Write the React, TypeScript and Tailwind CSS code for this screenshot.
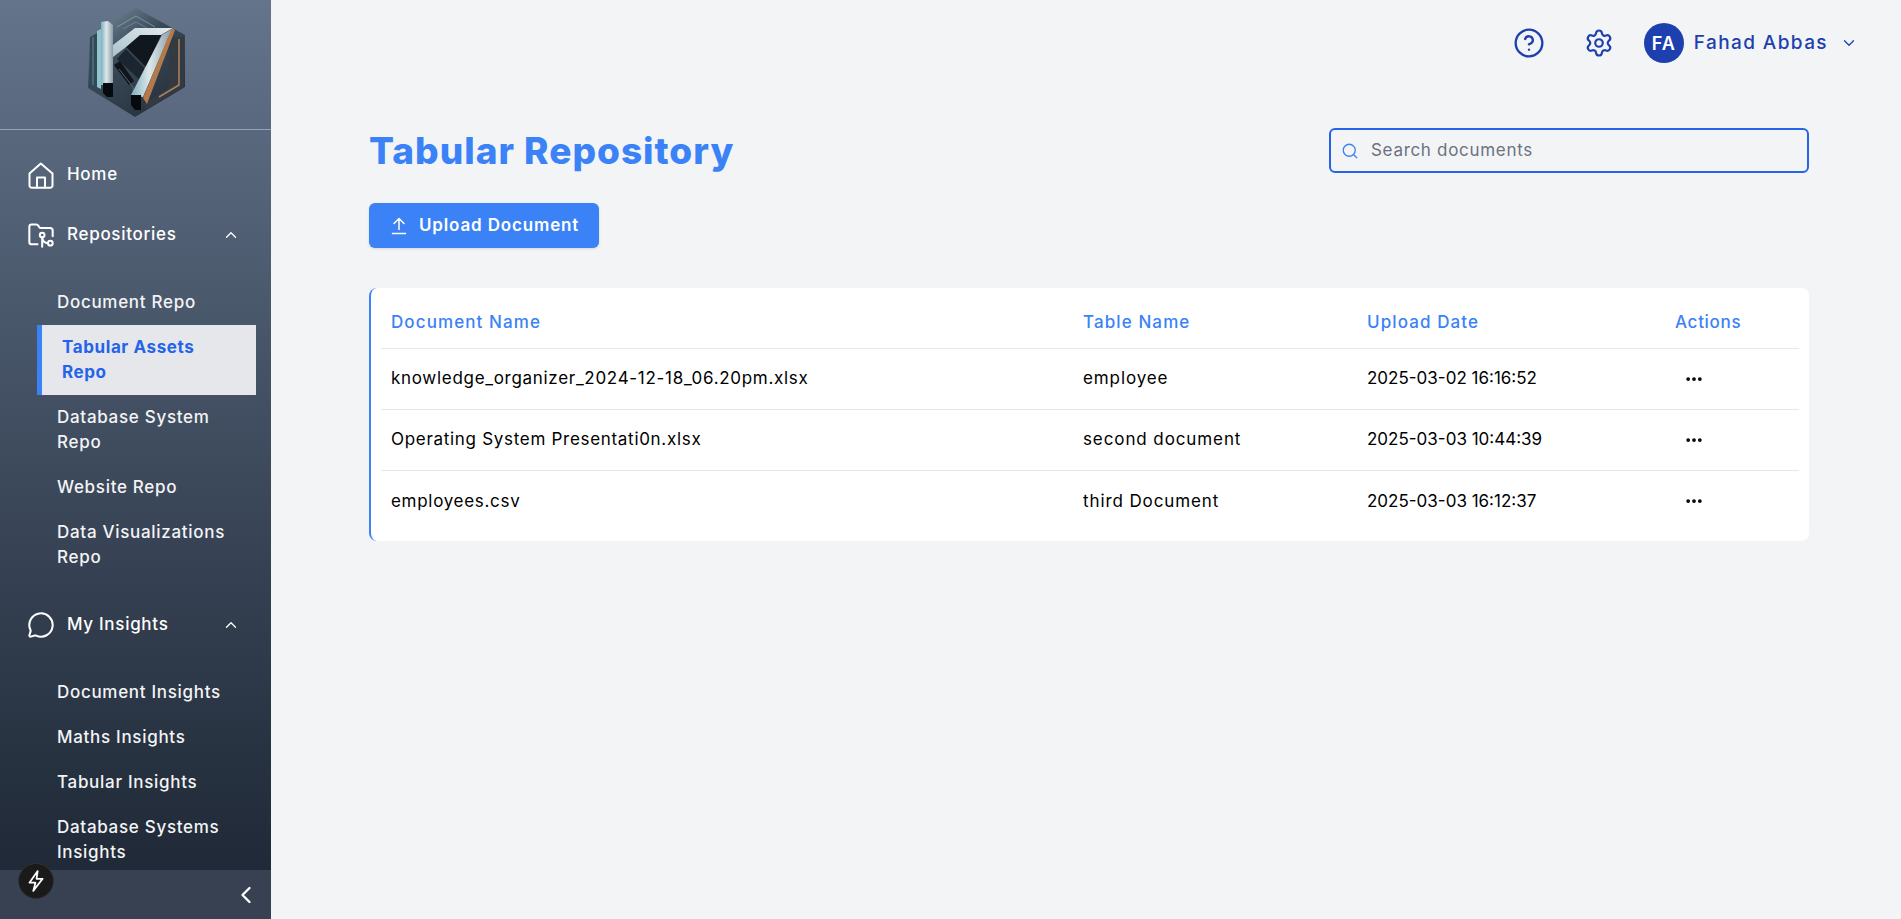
import {
  ChevronDown,
  ChevronLeft,
  ChevronUp,
  CircleHelp,
  FolderGit2,
  MessageCircle,
  MoreHorizontal,
  Search,
  Settings,
} from "lucide-react";
import type { ReactNode } from "react";

const docs = [
  {
    name: "knowledge_organizer_2024-12-18_06.20pm.xlsx",
    table: "employee",
    date: "2025-03-02 16:16:52",
  },
  {
    name: "Operating System Presentati0n.xlsx",
    table: "second document",
    date: "2025-03-03 10:44:39",
  },
  {
    name: "employees.csv",
    table: "third Document",
    date: "2025-03-03 16:12:37",
  },
];

function Logo() {
  return (
    <svg width="100" height="112" viewBox="0 0 100 112">
      <defs>
        <linearGradient id="hex" x1="0" y1="0" x2="0.7" y2="1">
          <stop offset="0" stopColor="#7d97a6" />
          <stop offset="0.45" stopColor="#3a4a59" />
          <stop offset="1" stopColor="#27313d" />
        </linearGradient>
        <linearGradient id="steel" x1="0" y1="0" x2="1" y2="0">
          <stop offset="0" stopColor="#7fb0bd" />
          <stop offset="0.45" stopColor="#dde7ea" />
          <stop offset="1" stopColor="#8a9ca8" />
        </linearGradient>
        <linearGradient id="arm" x1="0" y1="1" x2="1" y2="0">
          <stop offset="0" stopColor="#a9c4cc" />
          <stop offset="1" stopColor="#e4ebee" />
        </linearGradient>
      </defs>
      <polygon points="49,1 98,28 98,80 48,110 1,81 3,28" fill="url(#hex)" />
      <path d="M30 20 49 9 68 20" fill="none" stroke="#9fb3bf" strokeWidth="1" opacity="0.6" />
      <path d="M36 22 49 15 60 21" fill="none" stroke="#9fb3bf" strokeWidth="1" opacity="0.4" />
      <polygon points="3,30 12,25 12,82 2,80" fill="#33495a" />
      <path d="M6 30V78" stroke="#5f8a99" strokeWidth="1" />
      <polygon points="10,24 14,22 14,82 10,80" fill="#8fc3d0" />
      <polygon points="82,30 97,30 97,80 60,102 56,98 82,80" fill="#343a42" />
      <path d="M92 32V78L72 90" fill="none" stroke="#a9825f" strokeWidth="1.5" />
      <polygon points="39,40 53,28 74,28 59,60" fill="#10171e" />
      <polygon points="30,52 39,42 58,62 52,72" fill="#1b2630" />
      <polygon points="27,58 33,54 47,74 42,78" fill="#0f151b" />
      <path d="M32 62 46 80V96" fill="none" stroke="#52656f" strokeWidth="1" />
      <polygon points="26,38 48,21 86,21 74,28 53,28 39,40 26,50" fill="url(#arm)" />
      <polygon points="14,15 21,14 26,18 26,78 14,78" fill="url(#steel)" />
      <polygon points="75,28 85,22 56,90 44,88" fill="url(#steel)" />
      <polygon points="85,21 88,23 60,97 56,91" fill="#b57a4c" />
      <polygon points="16,76 26,76 26,90 20,90 16,86" fill="#06090d" />
      <polygon points="44,88 54,88 54,103 48,103 44,98" fill="#06090d" />
    </svg>
  );
}

function HomeIcon() {
  return (
    <svg width="26" height="27" viewBox="0 0 26 27" fill="none" stroke="white" strokeWidth="2" strokeLinejoin="round" strokeLinecap="round">
      <path d="M1.5 11.5 12.8 1.5 24.5 11.5V23.5a2.3 2.3 0 0 1-2.3 2.3H3.8a2.3 2.3 0 0 1-2.3-2.3Z" />
      <path d="M9 25.5V15.5h8v10" />
    </svg>
  );
}

function NavItem({ icon, label, open }: { icon: ReactNode; label: string; open?: boolean }) {
  return (
    <div className="flex h-[44px] items-center pl-[28px] pr-[31px] text-white">
      <span className="flex w-[39px] shrink-0 items-center">{icon}</span>
      <span className="flex-1 text-[17px] font-medium tracking-[0.7px]">{label}</span>
      {open && <ChevronUp size={18} strokeWidth={1.75} />}
    </div>
  );
}

function SubItem({ label, active }: { label: string; active?: boolean }) {
  if (active) {
    return (
      <div className="ml-[37px] mr-[15px] border-l-[5px] border-[#3b82f6] bg-[#e5e7eb] py-[10px] pl-[20px] pr-[30px] text-[17px] leading-[25px] font-bold tracking-[0.6px] text-[#2563eb]">
        {label}
      </div>
    );
  }
  return (
    <div className="ml-[57px] mr-[15px] py-[10px] text-[17px] leading-[25px] font-medium tracking-[0.7px] text-[#f3f4f6]">
      {label}
    </div>
  );
}

function Sidebar() {
  return (
    <aside className="relative flex h-[919px] w-[271px] shrink-0 flex-col">
      <div className="flex h-[870px] flex-col overflow-hidden bg-gradient-to-b from-[#64748b] to-[#1f2937]">
        <div className="flex h-[130px] shrink-0 items-start justify-center border-b border-[#94a3b8] pt-[7px] pl-[2px]">
          <Logo />
        </div>
        <div className="pt-[23px]">
          <NavItem icon={<HomeIcon />} label="Home" />
          <div className="h-[16px]" />
          <NavItem
            icon={<FolderGit2 size={28} strokeWidth={1.75} className="-ml-[1px]" />}
            label="Repositories"
            open
          />
          <div className="h-[23px]" />
          <SubItem label="Document Repo" />
          <SubItem label="Tabular Assets Repo" active />
          <SubItem label="Database System Repo" />
          <SubItem label="Website Repo" />
          <SubItem label="Data Visualizations Repo" />
          <div className="h-[23px]" />
          <NavItem
            icon={<MessageCircle size={28} strokeWidth={1.75} className="-ml-[1px]" />}
            label="My Insights"
            open
          />
          <div className="h-[23px]" />
          <SubItem label="Document Insights" />
          <SubItem label="Maths Insights" />
          <SubItem label="Tabular Insights" />
          <SubItem label="Database Systems Insights" />
        </div>
      </div>
      <div className="flex h-[49px] items-center justify-end bg-[#374151] pr-[11px] text-white">
        <ChevronLeft size={28} strokeWidth={2} />
      </div>
      <div className="absolute top-[863px] left-[18px] flex h-[36px] w-[36px] items-center justify-center rounded-full border border-[#333] bg-[#1a1a1a] text-white">
        <svg width="18" height="22" viewBox="0 0 16 20" fill="none" stroke="white" strokeWidth="1.6" strokeLinejoin="round">
          <path d="M9.5 1 2 11.5h5.5L5.5 19 14 8H8.5Z" />
        </svg>
      </div>
    </aside>
  );
}

function Header() {
  return (
    <header className="flex h-[86px] items-center justify-end pr-[43px] text-[#1e40af]">
      <CircleHelp size={32} strokeWidth={1.75} />
      <Settings size={30} strokeWidth={1.75} className="ml-[39px]" />
      <div className="ml-[30px] flex h-[40px] w-[40px] items-center justify-center rounded-full bg-[#1e40af] text-[18px] font-semibold tracking-[1px] text-white">
        FA
      </div>
      <span className="ml-[10px] text-[19px] font-medium tracking-[1.4px]">Fahad Abbas</span>
      <ChevronDown size={18} strokeWidth={1.75} className="ml-[12px]" />
    </header>
  );
}

function DocumentsTable() {
  return (
    <div className="mt-[40px] rounded-lg border-l-2 border-[#3b82f6] bg-white pr-[10px] pl-[10px]">
      <table className="w-full table-fixed text-left text-[17px] tracking-[0.7px]">
        <colgroup>
          <col className="w-[692px]" />
          <col className="w-[284px]" />
          <col className="w-[308px]" />
          <col />
        </colgroup>
        <thead>
          <tr className="h-[60px] border-b border-[#e5e7eb] tracking-[1.1px] text-[#3b82f6]">
            <th className="px-[10px] pt-[10px] font-medium">Document Name</th>
            <th className="px-[10px] pt-[10px] font-medium">Table Name</th>
            <th className="px-[10px] pt-[10px] font-medium">Upload Date</th>
            <th className="px-[10px] pt-[10px] font-medium tracking-[0.7px]">Actions</th>
          </tr>
        </thead>
        <tbody className="text-black">
          {docs.map((doc, i) => (
            <tr key={doc.name} className={i < 2 ? "h-[61px] border-b border-[#e5e7eb]" : "h-[71px] align-top"}>
              <td className={i < 2 ? "px-[10px]" : "px-[10px] pt-[18px]"}>{doc.name}</td>
              <td className={i < 2 ? "px-[10px] tracking-[0.9px]" : "px-[10px] pt-[18px] tracking-[0.9px]"}>{doc.table}</td>
              <td className={i < 2 ? "px-[10px] tracking-[0px]" : "px-[10px] pt-[18px] tracking-[0px]"}>{doc.date}</td>
              <td className={i < 2 ? "px-[10px]" : "px-[10px] pt-[20px]"}>
                <MoreHorizontal size={20} strokeWidth={2.5} className="ml-[9px]" />
              </td>
            </tr>
          ))}
        </tbody>
      </table>
    </div>
  );
}

export default function App() {
  return (
    <div className="flex h-[919px] overflow-hidden bg-[#f3f4f6] font-['Inter','Liberation_Sans',sans-serif]">
      <Sidebar />
      <main className="flex-1">
        <Header />
        <div className="mt-[42px] mr-[92px] ml-[98px]">
          <div className="flex h-[45px] items-center justify-between">
            <h1 className="text-[37px] font-extrabold tracking-[1px] text-[#3b82f6]">Tabular Repository</h1>
            <div className="flex h-[45px] w-[480px] items-center rounded-md border-2 border-[#2563eb] px-[10px]">
              <Search size={18} strokeWidth={1.75} className="text-[#3b82f6]" />
              <span className="ml-[12px] pt-[1px] text-[17px] tracking-[0.7px] text-[#6b7280]">Search documents</span>
            </div>
          </div>
          <button
            type="button"
            className="mt-[30px] flex h-[45px] w-[230px] items-center rounded-md bg-[#3b82f6] pl-[22px] text-[17px] font-semibold tracking-[0.85px] text-white shadow-sm"
          >
            <svg width="16" height="18" viewBox="0 0 16 18" fill="none" stroke="white" strokeWidth="1.5" strokeLinecap="round" strokeLinejoin="round">
              <path d="M8 12.5V1.5M3 6.5l5-5 5 5M1.5 16.5h13" />
            </svg>
            <span className="ml-[12px]">Upload Document</span>
          </button>
          <DocumentsTable />
        </div>
      </main>
    </div>
  );
}
